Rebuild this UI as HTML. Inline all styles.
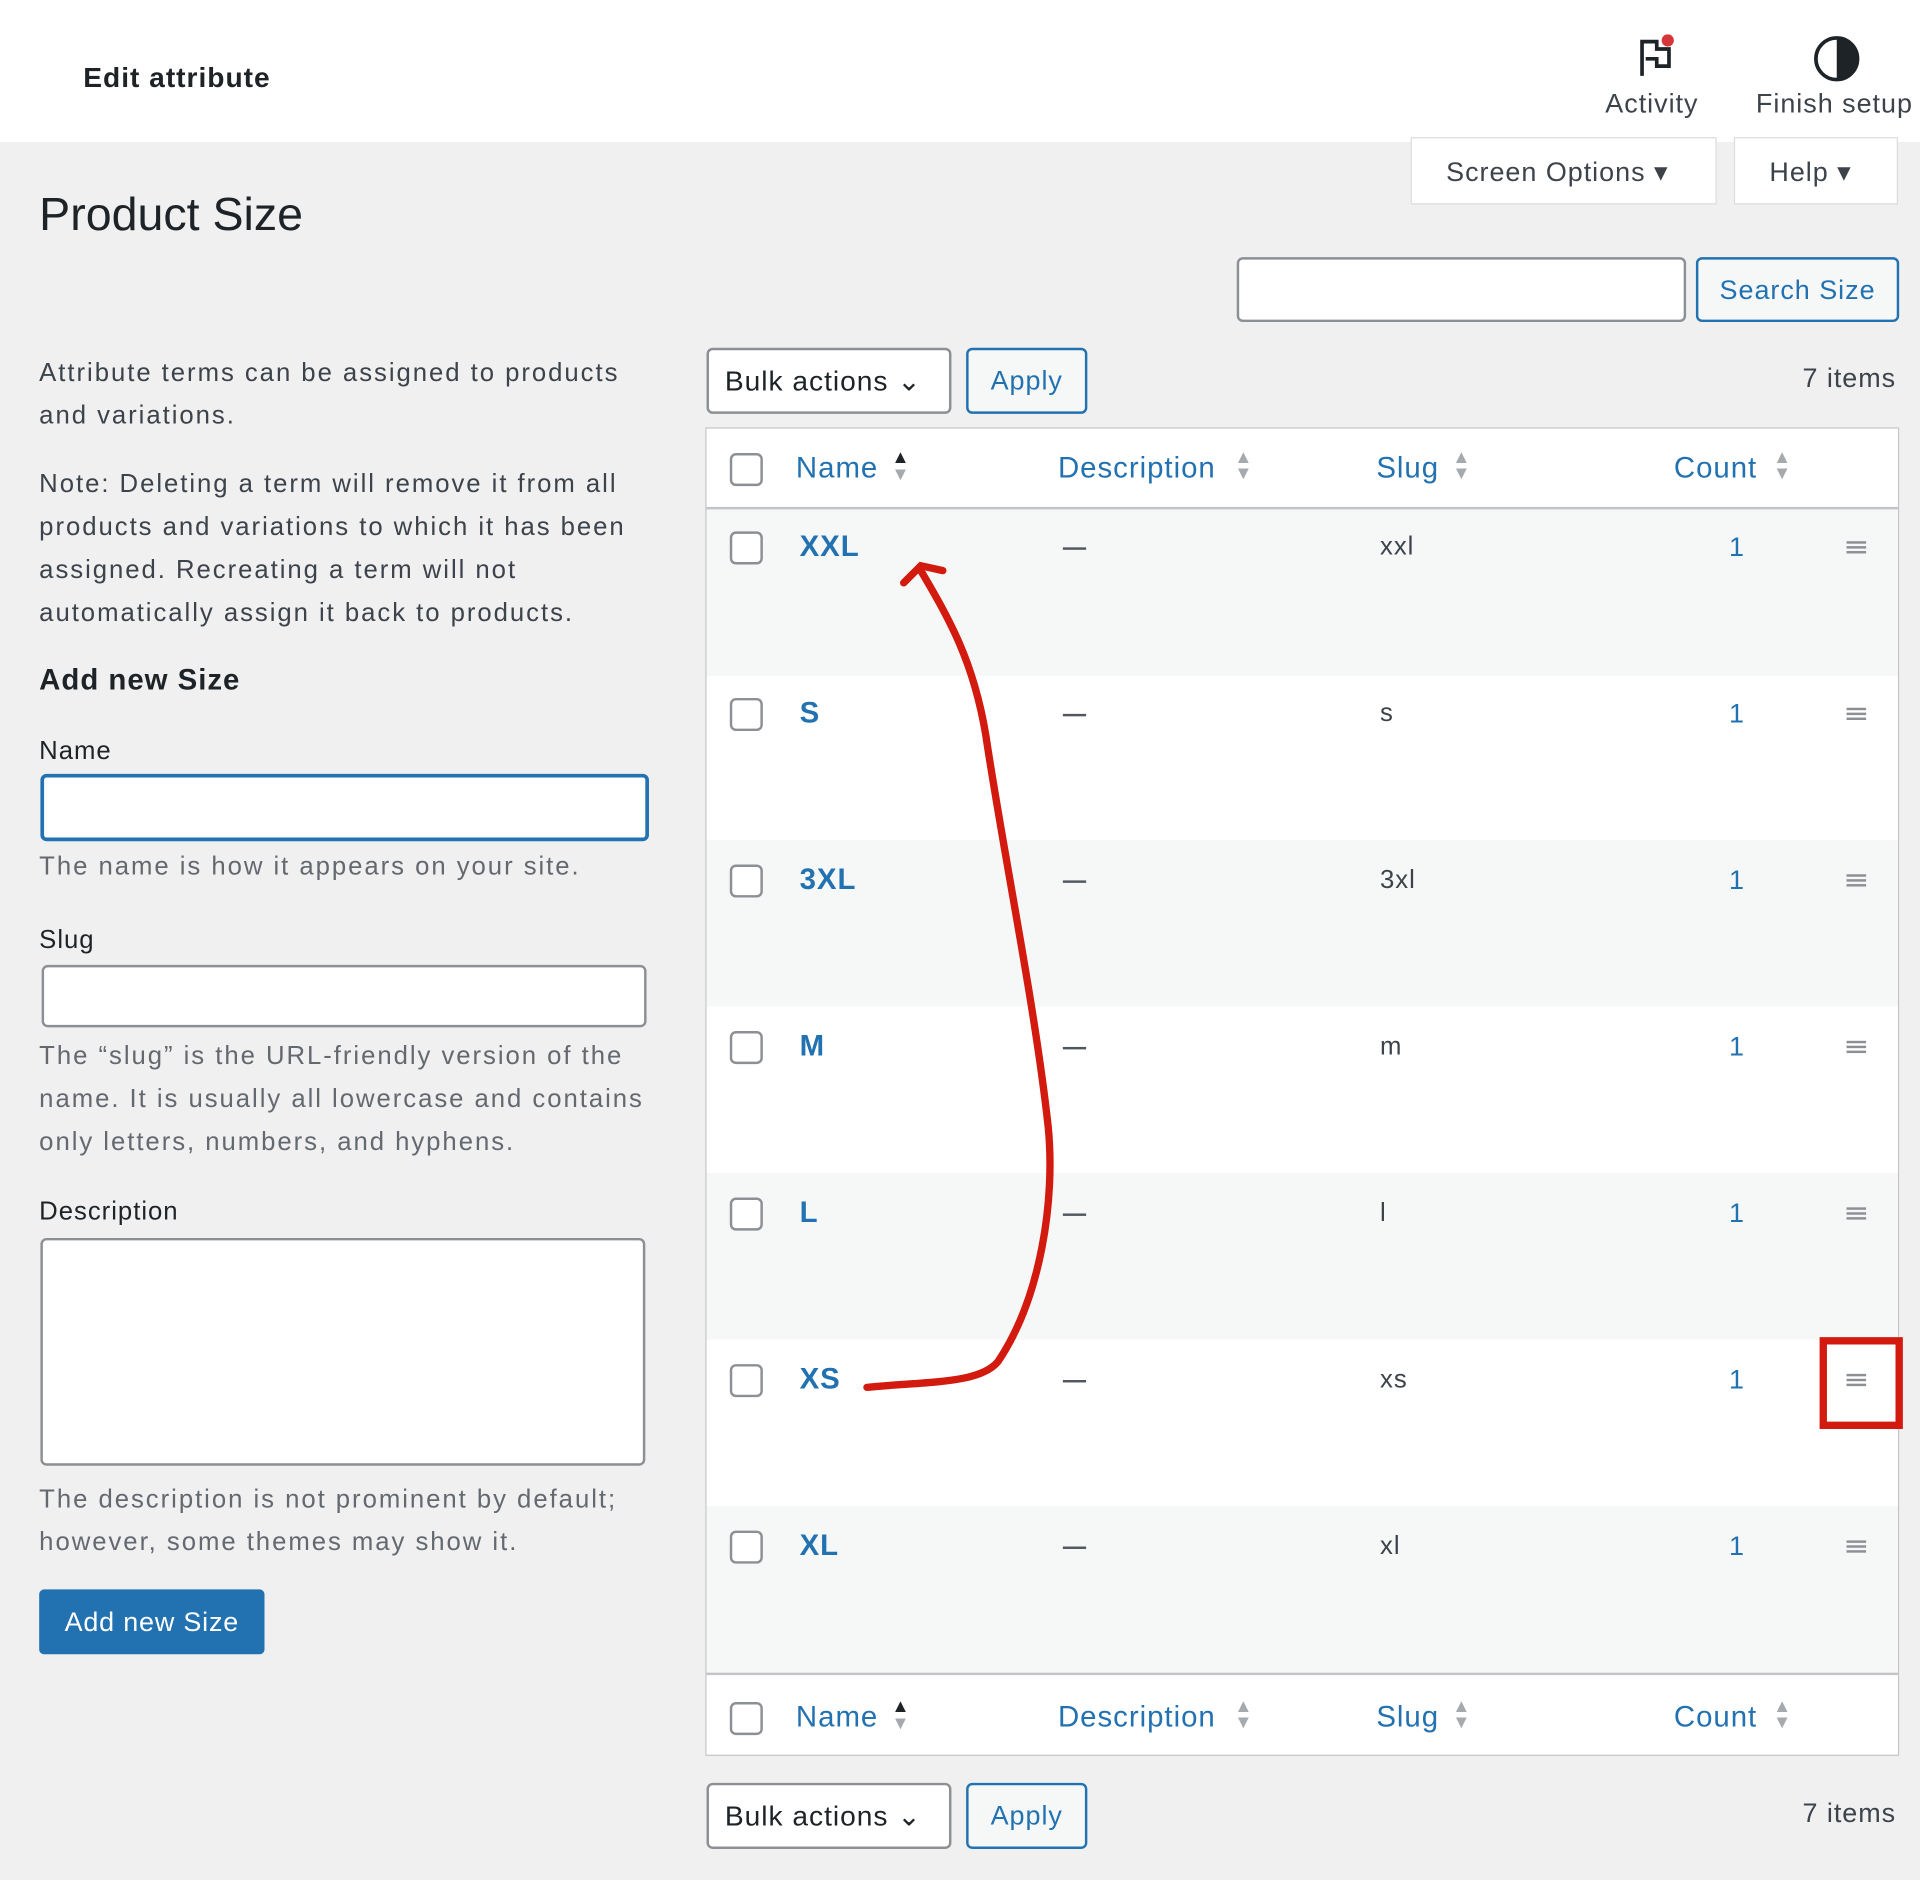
<!DOCTYPE html>
<html><head><meta charset="utf-8"><style>
html,body{margin:0;padding:0;width:1920px;height:1879px;overflow:hidden;background:#f0f0f1}
#s{position:absolute;left:0;top:0;width:1568px;height:1535px;transform:scale(1.22449);transform-origin:0 0;font-family:"Liberation Sans",sans-serif;color:#1d2327;letter-spacing:0.05em}
.a{position:absolute;white-space:nowrap}
.t{font-size:21px;color:#3c434a;letter-spacing:1.6px}
.box{position:absolute;background:#fff;border:2px solid #8c8f94;border-radius:5px;box-sizing:border-box}
.btn2{position:absolute;border:2px solid #2271b1;border-radius:5px;color:#2271b1;background:#f6f7f7;box-sizing:border-box;font-size:22px;text-align:center}
.cb{position:absolute;width:27px;height:27px;border:2px solid #8c8f94;border-radius:5px;background:#fff;box-sizing:border-box}
.row{position:absolute;left:577px;width:973px;height:136px}
.hd{font-size:24px;color:#2271b1}
.sort{position:absolute;font-size:15px;line-height:13px;color:#a7aaad;letter-spacing:0}
</style></head><body><div id="s">
<div class="a" style="left:0;top:0;width:1568px;height:116px;background:#fff"></div>
<div class="a" style="left:68px;top:50px;font-size:23px;font-weight:bold">Edit attribute</div>
<svg class="a" style="left:1336px;top:28px" width="34" height="36" viewBox="0 0 34 36"><path d="M5 34V6h12v6h10v14H17v-6H8" fill="none" stroke="#1d2327" stroke-width="3"/><circle cx="26" cy="5" r="5" fill="#d63638"/></svg>
<div class="a" style="left:1311px;top:72px;font-size:22px;color:#3c434a">Activity</div>
<svg class="a" style="left:1480px;top:28px" width="40" height="40"><circle cx="20" cy="20" r="17" fill="none" stroke="#1d2327" stroke-width="3"/><path d="M20 3a17 17 0 0 1 0 34z" fill="#1d2327"/></svg>
<div class="a" style="left:1434px;top:72px;font-size:22px;color:#3c434a">Finish setup</div>
<div class="a" style="left:1152px;top:112px;width:250px;height:55px;background:#fff;border:1px solid #dcdcde;box-sizing:border-box"></div>
<div class="a" style="left:1181px;top:128px;font-size:22px;color:#3c434a">Screen Options ▾</div>
<div class="a" style="left:1416px;top:112px;width:134px;height:55px;background:#fff;border:1px solid #dcdcde;box-sizing:border-box"></div>
<div class="a" style="left:1445px;top:128px;font-size:22px;color:#3c434a">Help ▾</div>
<div class="a" style="left:32px;top:155px;font-size:38px;letter-spacing:0">Product Size</div>
<div class="box" style="left:1010px;top:210px;width:367px;height:53px"></div>
<div class="btn2" style="left:1385px;top:210px;width:166px;height:53px;line-height:49px">Search Size</div>

<div class="a t" style="left:32px;top:287px;line-height:35px">Attribute terms can be assigned to products<br>and variations.</div>
<div class="a t" style="left:32px;top:378px;line-height:35px">Note: Deleting a term will remove it from all<br>products and variations to which it has been<br>assigned. Recreating a term will not<br>automatically assign it back to products.</div>
<div class="a" style="left:32px;top:542px;font-size:24px;font-weight:bold">Add new Size</div>
<div class="a" style="left:32px;top:602px;font-size:21px">Name</div>
<div class="box" style="left:33px;top:632px;width:497px;height:55px;border:3px solid #2271b1"></div>
<div class="a t" style="left:32px;top:696px;color:#646970">The name is how it appears on your site.</div>
<div class="a" style="left:32px;top:756px;font-size:21px">Slug</div>
<div class="box" style="left:34px;top:788px;width:494px;height:51px"></div>
<div class="a t" style="left:32px;top:845px;line-height:35px;color:#646970">The “slug” is the URL-friendly version of the<br>name. It is usually all lowercase and contains<br>only letters, numbers, and hyphens.</div>
<div class="a" style="left:32px;top:978px;font-size:21px">Description</div>
<div class="box" style="left:33px;top:1011px;width:494px;height:186px"></div>
<div class="a t" style="left:32px;top:1207px;line-height:35px;color:#646970">The description is not prominent by default;<br>however, some themes may show it.</div>
<div class="a" style="left:32px;top:1298px;width:184px;height:53px;background:#2271b1;border-radius:4px;color:#fff;font-size:22px;line-height:53px;text-align:center;letter-spacing:0.03em">Add new Size</div>

<div class="box" style="left:577px;top:284px;width:200px;height:54px"></div>
<div class="a" style="left:592px;top:298px;font-size:23px">Bulk actions ⌄</div>
<div class="btn2" style="left:789px;top:284px;width:99px;height:54px;line-height:50px">Apply</div>
<div class="a" style="left:1472px;top:296px;font-size:22px;color:#3c434a">7 items</div>

<div class="a" style="left:576px;top:349px;width:975px;height:1085px;border:1px solid #c3c4c7;background:#fff;box-sizing:border-box"></div>
<div class="row" style="top:414px;background:#f6f7f7;border-top:2px solid #c3c4c7"></div>
<div class="row" style="top:686px;background:#f6f7f7"></div>
<div class="row" style="top:958px;background:#f6f7f7"></div>
<div class="row" style="top:1230px;background:#f6f7f7;border-bottom:2px solid #c3c4c7"></div>

<div class="cb" style="left:596px;top:370px"></div>
<div class="a hd" style="left:650px;top:369px">Name</div><div class="sort" style="left:728px;top:367px;color:#1d2327">▲</div><div class="sort" style="left:728px;top:381px">▼</div>
<div class="a hd" style="left:864px;top:369px">Description</div><div class="sort" style="left:1008px;top:367px">▲<br>▼</div>
<div class="a hd" style="left:1124px;top:369px">Slug</div><div class="sort" style="left:1186px;top:367px">▲<br>▼</div>
<div class="a hd" style="left:1367px;top:369px">Count</div><div class="sort" style="left:1448px;top:367px">▲<br>▼</div>

<div class="cb" style="left:596px;top:1390px"></div>
<div class="a hd" style="left:650px;top:1389px">Name</div><div class="sort" style="left:728px;top:1387px;color:#1d2327">▲</div><div class="sort" style="left:728px;top:1401px">▼</div>
<div class="a hd" style="left:864px;top:1389px">Description</div><div class="sort" style="left:1008px;top:1387px">▲<br>▼</div>
<div class="a hd" style="left:1124px;top:1389px">Slug</div><div class="sort" style="left:1186px;top:1387px">▲<br>▼</div>
<div class="a hd" style="left:1367px;top:1389px">Count</div><div class="sort" style="left:1448px;top:1387px">▲<br>▼</div>

<div id="rows"></div>
<script>
var d=[["XXL","xxl"],["S","s"],["3XL","3xl"],["M","m"],["L","l"],["XS","xs"],["XL","xl"]],h="";
d.forEach(function(r,i){var y=434+i*136;
h+='<div class="cb" style="left:596px;top:'+y+'px"></div>'+
'<div class="a" style="left:653px;top:'+(y-1)+'px;font-size:24px;font-weight:bold;color:#2271b1">'+r[0]+'</div>'+
'<div class="a" style="left:868px;top:'+(y+13)+'px;width:19px;height:2px;background:#50575e"></div>'+
'<div class="a" style="left:1127px;top:'+(y+1)+'px;font-size:21px;color:#3c434a">'+r[1]+'</div>'+
'<div class="a" style="left:1412px;top:'+y+'px;font-size:22px;color:#2271b1">1</div>'+
'<div class="a" style="left:1508px;top:'+(y+8)+'px;width:16px;height:2px;background:#8c8f94;box-shadow:0 4px #8c8f94,0 8px #8c8f94"></div>';});
document.getElementById('rows').innerHTML=h;
</script>

<div class="box" style="left:577px;top:1456px;width:200px;height:54px"></div>
<div class="a" style="left:592px;top:1470px;font-size:23px">Bulk actions ⌄</div>
<div class="btn2" style="left:789px;top:1456px;width:99px;height:54px;line-height:50px">Apply</div>
<div class="a" style="left:1472px;top:1468px;font-size:22px;color:#3c434a">7 items</div>

<svg class="a" style="left:0;top:0" width="1568" height="1535">
<path d="M708 1133 C760 1128 800 1130 815 1112 C850 1060 862 980 856 920 C845 820 820 700 805 600 C795 540 775 505 752 466" fill="none" stroke="#d21a0e" stroke-width="6" stroke-linecap="round"/>
<path d="M738 476 L752 462 L770 466" fill="none" stroke="#d21a0e" stroke-width="6" stroke-linecap="round"/>
<rect x="1489" y="1095" width="62" height="69" fill="none" stroke="#d21a0e" stroke-width="6"/>
</svg>
</div></body></html>
